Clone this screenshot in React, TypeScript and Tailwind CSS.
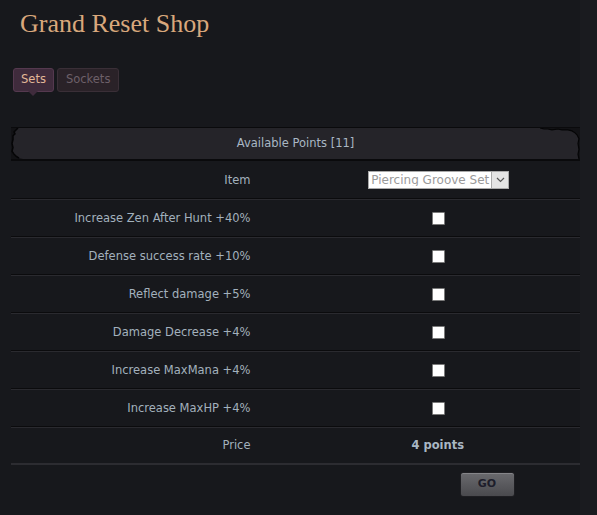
import React from 'react';

const rows = [
  'Increase Zen After Hunt +40%',
  'Defense success rate +10%',
  'Reflect damage +5%',
  'Damage Decrease +4%',
  'Increase MaxMana +4%',
  'Increase MaxHP +4%',
];

const Checkbox: React.FC = () => (
  <span className="inline-block ml-[2px] w-[13px] h-[13px] bg-white border border-[#7a7a7a] rounded-[1px]" />
);

const Row: React.FC<{ label: string; children: React.ReactNode; last?: boolean }> = ({ label, children, last }) => (
  <div
    className={
      'grid grid-cols-2 h-[38px] items-center ' +
      (last ? 'border-b-2 border-[#2c2c31]' : 'border-b border-[#0b0b0d] shadow-[0_1px_0_#2a2a2f]')
    }
  >
    <div className="text-right pr-[45px] pt-[2px] text-[11.5px] text-[#a3b1bd] whitespace-nowrap">{label}</div>
    <div className="flex justify-center pt-[1px]">{children}</div>
  </div>
);

const App: React.FC = () => {
  return (
    <div
      className="w-[597px] h-[515px] bg-[#17181c] overflow-hidden relative"
      style={{ fontFamily: '"DejaVu Sans", Verdana, sans-serif' }}
    >
      <div className="absolute right-0 top-0 w-[17px] h-full bg-[#1a1b1f]" />
      <div className="relative pl-[20px] pt-[7px]">
        <h1
          className="text-[26px] leading-[34px] text-[#d9a87c]"
          style={{ fontFamily: '"Liberation Serif", "Times New Roman", serif' }}
        >
          Grand Reset Shop
        </h1>
      </div>

      {/* tabs */}
      <div className="relative flex gap-[3px] pl-[13px] mt-[27px]">
        <div className="relative">
          <div className="h-[24px] px-[7px] flex items-center rounded-[3px] bg-[#3f2b3c] border border-[#55394f] text-[11.5px] text-[#e2b898]">
            Sets
          </div>
          <div className="absolute left-[15px] top-[23px] w-0 h-0 border-l-[5px] border-r-[5px] border-t-[5px] border-l-transparent border-r-transparent border-t-[#3f2b3c]" />
        </div>
        <div className="h-[24px] px-[8px] flex items-center rounded-[3px] bg-[#2a2228] border border-[#3a2f37] text-[11.5px] text-[#6d6069]">
          Sockets
        </div>
      </div>

      {/* table */}
      <div className="relative ml-[11px] w-[569px] mt-[35px]">
        <div className="relative h-[34px] border-t border-b-2 border-[#0a0a0c] bg-[#252429] flex items-center justify-center">
          <svg className="absolute left-0 top-0 h-full w-[12px]" viewBox="0 0 12 32" preserveAspectRatio="none">
            <path d="M0 0 H7 L5 2 L3 4 L4 6 L2 8 L2 12 L1 16 L2 20 L1 24 L3 27 L5 29 L8 31 L12 32 H0 Z" fill="#121215" />
            <path d="M7 0 L5 2 L3 4 L4 6 L2 8 L2 12 L1 16 L2 20 L1 24 L3 27 L5 29 L8 31" stroke="#050506" strokeWidth="1.5" fill="none" />
          </svg>
          <svg className="absolute right-0 top-0 h-full w-[40px]" viewBox="0 0 40 32" preserveAspectRatio="none">
            <path d="M0 0 H40 V32 H39 L38 27 L39 22 L38 16 L39 11 L37 7 L35 5 L32 3 L28 2 L22 2 L18 1 L12 2 L8 1 L4 1 L0 0 Z" fill="#121215" />
            <path d="M0 0 L4 1 L8 1 L12 2 L18 1 L22 2 L28 2 L32 3 L35 5 L37 7 L39 11 L38 16 L39 22 L38 27 L39 32" stroke="#050506" strokeWidth="1.2" fill="none" />
          </svg>
          <span className="relative pt-[1px] text-[11.5px] text-[#a9b7c4]">Available Points [11]</span>
        </div>

        <Row label="Item">
          <div className="ml-[2px] flex items-center h-[18px] w-[141px] bg-white border border-[#a9a9a9] text-[12px] text-[#9a9a9a]">
            <span className="flex-1 pl-[2px] leading-none whitespace-nowrap overflow-hidden">Piercing Groove Set</span>
            <span className="w-[17px] h-full flex items-center justify-center bg-[#e4e4e4] border-l border-[#a9a9a9]">
              <svg width="9" height="6" viewBox="0 0 9 6">
                <path d="M1 1 L4.5 4.5 L8 1" stroke="#555" strokeWidth="1.2" fill="none" />
              </svg>
            </span>
          </div>
        </Row>
        {rows.map((r) => (
          <Row key={r} label={r}>
            <Checkbox />
          </Row>
        ))}
        <Row label="Price" last>
          <span className="text-[11.5px] font-bold text-[#a9b7c4]">4 points</span>
        </Row>

        <div className="grid grid-cols-2 pt-[7px]">
          <div />
          <div className="flex justify-start pl-[164px]">
            <button className="w-[55px] h-[25px] rounded-[3px] border border-[#1e1e22] bg-gradient-to-b from-[#6a6a6e] to-[#4a4a4e] shadow-[inset_0_1px_0_#858589] text-[11px] font-bold text-[#1d1d2a]">
              GO
            </button>
          </div>
        </div>
      </div>
    </div>
  );
};

export default App;
